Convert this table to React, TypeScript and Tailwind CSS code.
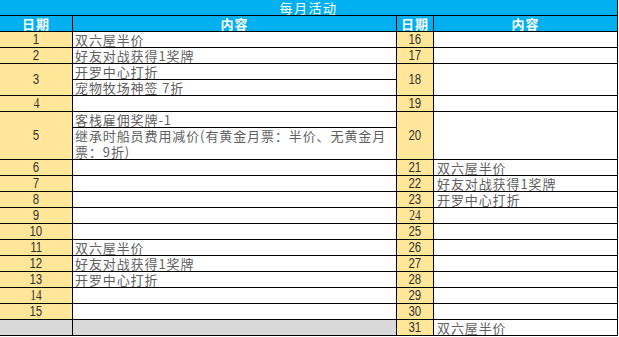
import React from "react";

// ── Cell helpers ──────────────────────────────────────────────────────────────
const dateCls =
  "flex items-center justify-center bg-[#ffe699] text-[14px] leading-[15px] text-[#333333] font-['Liberation_Sans',sans-serif]";
const textCls =
  "bg-white pl-[2px] text-[13px] leading-[15px] tracking-[0.9px] text-[#5f5f5f] whitespace-nowrap font-['Noto_Sans_CJK_SC',sans-serif]";
const headCls =
  "flex items-center justify-center bg-[#00b0f0] text-[13px] leading-[15px] font-bold tracking-[1px] text-white font-['Noto_Sans_CJK_SC',sans-serif]";

function D({ n, span = "", serif = false }: { n: number; span?: string; serif?: boolean }) {
  return (
    <div className={`${dateCls} ${span}`}>
      <span className={`inline-block scale-x-[0.82] ${serif ? "font-['Liberation_Serif',serif]" : ""}`}>{n}</span>
    </div>
  );
}

function T({ children, span = "", extra = "" }: { children?: React.ReactNode; span?: string; extra?: string }) {
  return <div className={`${textCls} ${span} ${extra}`}>{children}</div>;
}

export default function App() {
  return (
    <div className="bg-white w-[619px] h-[337px]">
      <div className="grid w-[618px] grid-cols-[72px_323px_36px_183px] auto-rows-[15px] gap-px bg-black pr-px pb-px">
        {/* Title */}
        <div className="col-span-4 flex items-center justify-center bg-[#00b0f0] text-[13px] leading-[15px] tracking-[1.5px] text-white font-['Noto_Sans_CJK_SC',sans-serif]">
          每月活动
        </div>

        {/* Header */}
        <div className={headCls}>日期</div>
        <div className={headCls}>内容</div>
        <div className={headCls}>日期</div>
        <div className={headCls}>内容</div>

        {/* 1 / 16 */}
        <D n={1} />
        <T>双六屋半价</T>
        <D n={16} />
        <T />

        {/* 2 / 17 */}
        <D n={2} />
        <T>好友对战获得1奖牌</T>
        <D n={17} />
        <T />

        {/* 3 / 18 */}
        <D n={3} span="row-span-2" />
        <T>开罗中心打折</T>
        <D n={18} span="row-span-2" />
        <T span="row-span-2" />
        <T>宠物牧场神签 7折</T>

        {/* 4 / 19 */}
        <D n={4} serif />
        <T />
        <D n={19} />
        <T />

        {/* 5 / 20 */}
        <D n={5} span="row-span-3" />
        <T>客栈雇佣奖牌-1</T>
        <D n={20} span="row-span-3" />
        <T span="row-span-3" />
        <T span="row-span-2" extra="leading-[16px]">
          继承时船员费用减价(有黄金月票：半价、无黄金月
          <br />
          票：9折)
        </T>

        {/* 6..15 / 21..30 */}
        <D n={6} />
        <T />
        <D n={21} />
        <T extra="pl-[3px]">双六屋半价</T>

        <D n={7} />
        <T />
        <D n={22} />
        <T extra="pl-[3px]">好友对战获得1奖牌</T>

        <D n={8} />
        <T />
        <D n={23} />
        <T extra="pl-[3px]">开罗中心打折</T>

        <D n={9} />
        <T />
        <D n={24} serif />
        <T />

        <D n={10} />
        <T />
        <D n={25} />
        <T />

        <D n={11} />
        <T>双六屋半价</T>
        <D n={26} />
        <T />

        <D n={12} />
        <T>好友对战获得1奖牌</T>
        <D n={27} />
        <T />

        <D n={13} />
        <T>开罗中心打折</T>
        <D n={28} />
        <T />

        <D n={14} serif />
        <T />
        <D n={29} />
        <T />

        <D n={15} />
        <T />
        <D n={30} />
        <T />

        {/* Last row */}
        <div className="bg-[#d9d9d9]" />
        <div className="bg-[#d9d9d9]" />
        <D n={31} />
        <T extra="pl-[3px]">双六屋半价</T>
      </div>
    </div>
  );
}
